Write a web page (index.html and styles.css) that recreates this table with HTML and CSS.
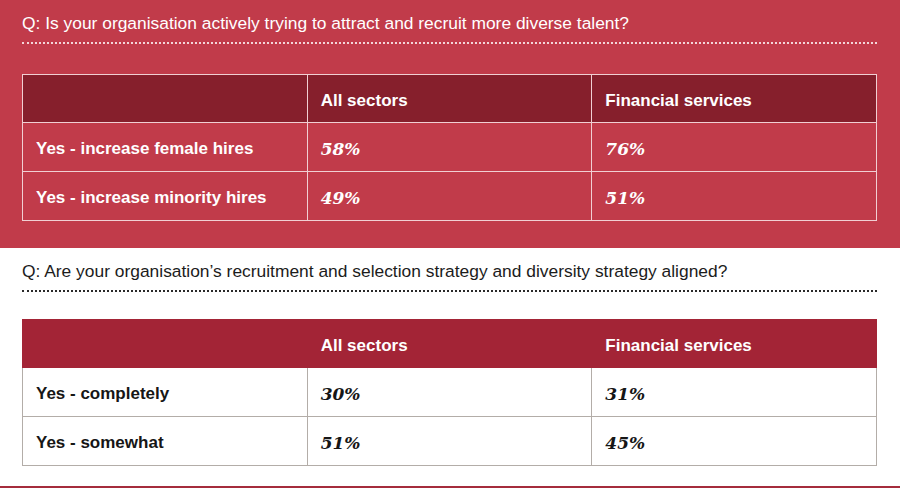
FILE: index.html
```html
<!DOCTYPE html>
<html lang="en">
<head>
<meta charset="utf-8">
<title>Diversity recruitment survey</title>
<link rel="stylesheet" href="styles.css">
</head>
<body>
<section class="panel panel-red">
  <h2 class="question">Q: Is your organisation actively trying to attract and recruit more diverse talent?</h2>
  <table class="data data-red">
    <thead>
      <tr><th></th><th>All sectors</th><th>Financial services</th></tr>
    </thead>
    <tbody>
      <tr><td class="label">Yes - increase female hires</td><td class="num">58%</td><td class="num">76%</td></tr>
      <tr><td class="label">Yes - increase minority hires</td><td class="num">49%</td><td class="num">51%</td></tr>
    </tbody>
  </table>
</section>
<section class="panel panel-white">
  <h2 class="question">Q: Are your organisation’s recruitment and selection strategy and diversity strategy aligned?</h2>
  <table class="data data-white">
    <thead>
      <tr><th></th><th>All sectors</th><th>Financial services</th></tr>
    </thead>
    <tbody>
      <tr><td class="label">Yes - completely</td><td class="num">30%</td><td class="num">31%</td></tr>
      <tr><td class="label">Yes - somewhat</td><td class="num">51%</td><td class="num">45%</td></tr>
    </tbody>
  </table>
</section>
<div class="footer-bar"></div>
</body>
</html>
```

FILE: styles.css
```css
html, body {
  margin: 0;
  padding: 0;
  background: #ffffff;
}
body {
  font-family: "Liberation Sans", Arial, Helvetica, sans-serif;
  width: 900px;
  height: 488px;
  overflow: hidden;
}
.panel {
  box-sizing: border-box;
  padding: 13px 23px 0 22px;
}
.panel-red {
  background: #c13b4a;
  height: 248px;
  color: #ffffff;
}
.panel-white {
  background: #ffffff;
  height: 238px;
  color: #161616;
}
.question {
  margin: 0;
  font-size: 17.4px;
  line-height: 20px;
  font-weight: normal;
  padding-bottom: 9px;
  border-bottom: 2px dotted;
}
.panel-red .question {
  color: #ffffff;
  border-bottom-color: #f3d6d9;
}
.panel-white .question {
  color: #1c1c1c;
  border-bottom-color: #2a2a2a;
}
.data {
  width: 855px;
  border-collapse: collapse;
  table-layout: fixed;
  font-size: 17px;
}
.data-red {
  margin-top: 30px;
}
.data-white {
  margin-top: 27px;
}
.data th,
.data td {
  height: 49px;
  box-sizing: border-box;
  padding: 4px 0 0 13px;
  text-align: left;
  vertical-align: middle;
  font-weight: bold;
}
.data th {
  height: 48px;
}
.data-red th,
.data-red td {
  border: 1px solid #f1cfd3;
}
.data-red th {
  background: #861f2c;
}
.data-white th {
  background: #a32436;
  color: #ffffff;
  border: 1px solid #a32436;
  border-left-color: #eab8be;
}
.data-white th:first-child {
  border-left-color: #a32436;
}
.data-white td {
  border: 1px solid #b3ada8;
}
.data .num {
  font-family: "DejaVu Serif", Georgia, serif;
  font-style: italic;
  font-weight: bold;
  font-size: 17px;
}
.footer-bar {
  height: 2px;
  background: #a52c3c;
}
```
